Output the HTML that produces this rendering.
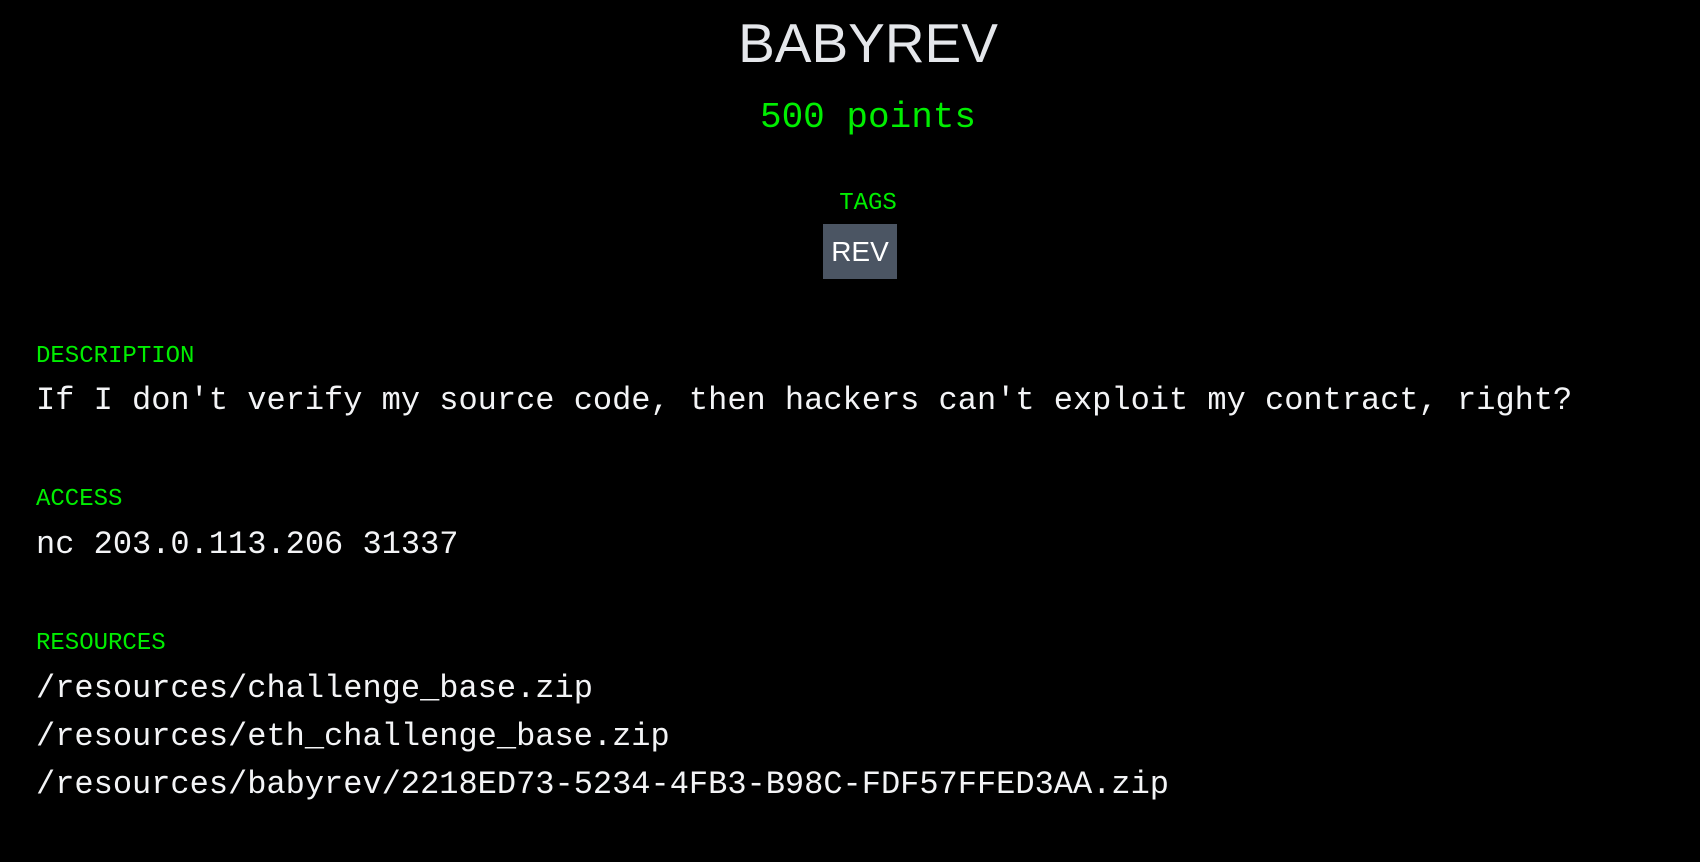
<!DOCTYPE html>
<html><head><meta charset="utf-8"><style>
html,body{margin:0;padding:0;background:#000;width:1700px;height:862px;overflow:hidden;}
div{position:absolute;white-space:pre;}
.m{font-family:"Liberation Mono",monospace;line-height:1.133;}
.s{font-family:"Liberation Sans",sans-serif;line-height:1.117;}
.g{color:#00ee00;}
.w{color:#f3f4f6;}
.lab{font-size:24px;left:36px;}
.txt{font-size:32px;left:36px;}
</style></head><body>
<div class="s" style="left:0;width:1736px;text-align:center;top:13px;font-size:55px;color:#e5e7eb;">BABYREV</div>
<div class="m g" style="left:0;width:1736px;text-align:center;top:98px;font-size:36px;">500 points</div>
<div class="m g" style="left:0;width:1736px;text-align:center;top:190px;font-size:24px;">TAGS</div>
<div style="left:823px;top:224px;width:74px;height:55px;background:#4b5563;"></div>
<div class="s" style="left:823px;width:74px;text-align:center;top:236px;font-size:28px;color:#fff;">REV</div>
<div class="m g lab" style="top:343px;">DESCRIPTION</div>
<div class="m w txt" style="top:383px;">If I don't verify my source code, then hackers can't exploit my contract, right?</div>
<div class="m g lab" style="top:486px;">ACCESS</div>
<div class="m w txt" style="top:527px;">nc 203.0.113.206 31337</div>
<div class="m g lab" style="top:630px;">RESOURCES</div>
<div class="m w txt" style="top:671px;">/resources/challenge_base.zip</div>
<div class="m w txt" style="top:719px;">/resources/eth_challenge_base.zip</div>
<div class="m w txt" style="top:767px;">/resources/babyrev/2218ED73-5234-4FB3-B98C-FDF57FFED3AA.zip</div>
</body></html>
